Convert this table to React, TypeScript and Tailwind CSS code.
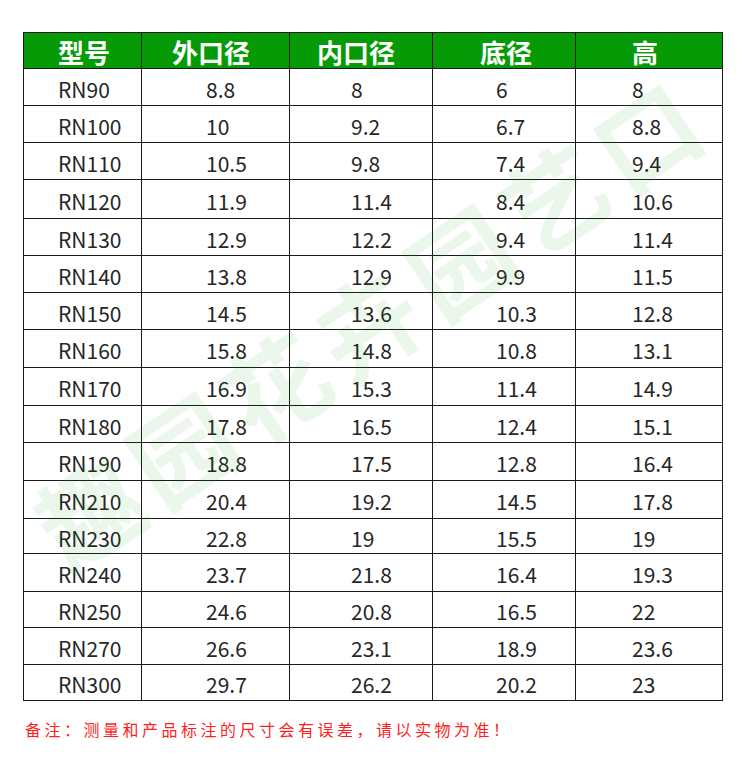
import React from "react";

// 尺寸表：型号 / 外口径 / 内口径 / 底径 / 高 (单位 cm)
const rows: { h: number; v: string[] }[] = [
  { h: 37, v: ["RN90", "8.8", "8", "6", "8"] },
  { h: 37, v: ["RN100", "10", "9.2", "6.7", "8.8"] },
  { h: 37, v: ["RN110", "10.5", "9.8", "7.4", "9.4"] },
  { h: 39, v: ["RN120", "11.9", "11.4", "8.4", "10.6"] },
  { h: 37, v: ["RN130", "12.9", "12.2", "9.4", "11.4"] },
  { h: 37, v: ["RN140", "13.8", "12.9", "9.9", "11.5"] },
  { h: 37, v: ["RN150", "14.5", "13.6", "10.3", "12.8"] },
  { h: 38, v: ["RN160", "15.8", "14.8", "10.8", "13.1"] },
  { h: 38, v: ["RN170", "16.9", "15.3", "11.4", "14.9"] },
  { h: 37, v: ["RN180", "17.8", "16.5", "12.4", "15.1"] },
  { h: 38, v: ["RN190", "18.8", "17.5", "12.8", "16.4"] },
  { h: 38, v: ["RN210", "20.4", "19.2", "14.5", "17.8"] },
  { h: 35, v: ["RN230", "22.8", "19", "15.5", "19"] },
  { h: 38, v: ["RN240", "23.7", "21.8", "16.4", "19.3"] },
  { h: 36, v: ["RN250", "24.6", "20.8", "16.5", "22"] },
  { h: 37, v: ["RN270", "26.6", "23.1", "18.9", "23.6"] },
  { h: 36, v: ["RN300", "29.7", "26.2", "20.2", "23"] },
];

const headers = ["型号", "外口径", "内口径", "底径", "高"];
const widths = ["w-[118px]", "w-[148px]", "w-[143px]", "w-[143px]", "w-[147px]"];
const headPad = ["pl-[34px]", "pl-[30px]", "pl-[27px]", "pl-[47px]", "pl-[56px]"];
const bodyPad = ["pl-[34px]", "pl-[64px]", "pl-[61px]", "pl-[63px]", "pl-[56px]"];

export default function App() {
  return (
    <div
      className="relative w-[750px] h-[762px] bg-white overflow-hidden"
      style={{ fontFamily: '"Noto Sans CJK SC", "Noto Sans", sans-serif' }}
    >
      <div className="pt-[32px] pl-[23px]">
        <table className="border-collapse table-fixed w-[699px]">
          <thead>
            <tr className="h-[36px] bg-[#069b06]">
              {headers.map((t, i) => (
                <th
                  key={t}
                  className={`${widths[i]} ${headPad[i]} border border-[#1a1a1a] text-left text-white text-[26px] font-bold leading-none whitespace-nowrap pt-[2px]`}
                >
                  {t}
                </th>
              ))}
            </tr>
          </thead>
          <tbody>
            {rows.map((r) => (
              <tr key={r.v[0]} style={{ height: r.h }}>
                {r.v.map((c, i) => (
                  <td
                    key={i}
                    className={`${bodyPad[i]} border border-[#1a1a1a] text-left text-[21px] text-[#262626] leading-none pt-[4px] whitespace-nowrap`}
                  >
                    {c}
                  </td>
                ))}
              </tr>
            ))}
          </tbody>
        </table>
      </div>

      <p className="mt-[20px] pl-[25px] text-[16px] tracking-[3.5px] text-[#ff1e1e] leading-none">
        备注：测量和产品标注的尺寸会有误差，请以实物为准！
      </p>

      {/* 水印 */}
      <div className="pointer-events-none absolute left-[-30px] top-[268px] w-[800px] text-center -rotate-[34deg] text-[102px] font-bold leading-none tracking-[10px] text-[#0a9a0a] opacity-[0.07] whitespace-nowrap">
        趣园花卉园艺口
      </div>
    </div>
  );
}
